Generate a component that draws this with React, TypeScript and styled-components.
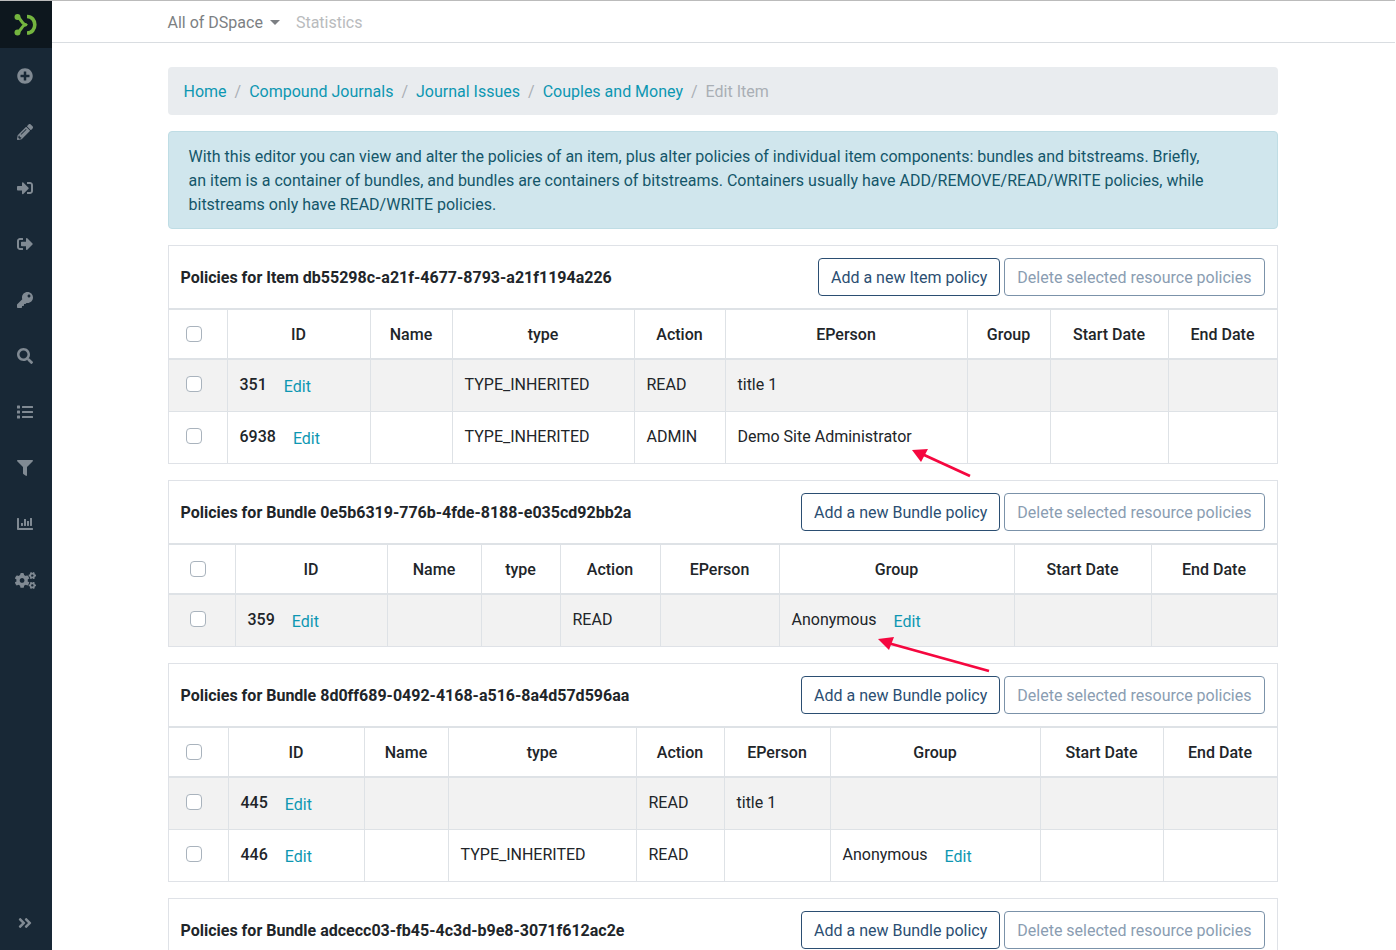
import React from 'react';
import styled, { createGlobalStyle } from 'styled-components';
import {
	FaPlusCircle,
	FaPencilAlt,
	FaSignInAlt,
	FaSignOutAlt,
	FaKey,
	FaSearch,
	FaList,
	FaFilter,
	FaChartBar,
	FaCogs,
	FaAngleDoubleRight,
} from 'react-icons/fa';

type Policy = {
	title: string;
	addLabel: string;
	widths: number[];
	rows: React.ReactNode[][];
};

const Edit = styled.a`
	color: #0d97b2;
	margin-left: 17px;
	position: relative;
	top: 2px;
`;

const heads = ['ID', 'Name', 'type', 'Action', 'EPerson', 'Group', 'Start Date', 'End Date'];

const policies: Policy[] = [
	{
		title: 'Policies for Item db55298c-a21f-4677-8793-a21f1194a226',
		addLabel: 'Add a new Item policy',
		widths: [58, 143, 82, 182, 91, 242, 83, 118, 109],
		rows: [
			[<><b>351</b><Edit>Edit</Edit></>, '', 'TYPE_INHERITED', 'READ', 'title 1', '', '', ''],
			[<><b>6938</b><Edit>Edit</Edit></>, '', 'TYPE_INHERITED', 'ADMIN', 'Demo Site Administrator', '', '', ''],
		],
	},
	{
		title: 'Policies for Bundle 0e5b6319-776b-4fde-8188-e035cd92bb2a',
		addLabel: 'Add a new Bundle policy',
		widths: [66, 152, 94, 79, 100, 119, 235, 137, 126],
		rows: [
			[<><b>359</b><Edit>Edit</Edit></>, '', '', 'READ', '', <>Anonymous<Edit>Edit</Edit></>, '', ''],
		],
	},
	{
		title: 'Policies for Bundle 8d0ff689-0492-4168-a516-8a4d57d596aa',
		addLabel: 'Add a new Bundle policy',
		widths: [59, 136, 84, 188, 88, 106, 210, 123, 114],
		rows: [
			[<><b>445</b><Edit>Edit</Edit></>, '', '', 'READ', 'title 1', '', '', ''],
			[<><b>446</b><Edit>Edit</Edit></>, '', 'TYPE_INHERITED', 'READ', '', <>Anonymous<Edit>Edit</Edit></>, '', ''],
		],
	},
	{
		title: 'Policies for Bundle adcecc03-fb45-4c3d-b9e8-3071f612ac2e',
		addLabel: 'Add a new Bundle policy',
		widths: [],
		rows: [],
	},
];

const menuIcons = [FaPlusCircle, FaPencilAlt, FaSignInAlt, FaSignOutAlt, FaKey, FaSearch, FaList, FaFilter, FaChartBar];

const App = (): JSX.Element => {
	return (
		<Page>
			<GlobalStyle />
			<Sidebar>
				<LogoBox>
					<svg width="24" height="24" viewBox="0 0 24 24" fill="none">
						<path d="M14 3.5 C19 3.5 21.8 7.5 21.8 11.8 C21.8 16 19 20 14 20" stroke="#74b53f" strokeWidth="3.6" />
						<path d="M4.5 4 C8 5.5 8 9.5 12 11.8 C8 14 8 18 4.5 19.5" stroke="#74b53f" strokeWidth="3" />
						<circle cx="4.5" cy="4" r="3" fill="#74b53f" />
						<circle cx="4.5" cy="19.5" r="3" fill="#74b53f" />
						<circle cx="12.5" cy="11.8" r="1.8" fill="#74b53f" />
					</svg>
				</LogoBox>
				<Menu>
					{menuIcons.map((Icon, i) => (
						<MenuItem key={i}>
							<Icon />
						</MenuItem>
					))}
					<MenuItem>
						<FaCogs size={21} />
					</MenuItem>
				</Menu>
				<Collapse>
					<FaAngleDoubleRight />
				</Collapse>
			</Sidebar>
			<Main>
				<TopNav>
					<NavInner>
						<NavDrop>All of DSpace</NavDrop>
						<NavLink>Statistics</NavLink>
					</NavInner>
				</TopNav>
				<Container>
					<Crumbs>
						<a>Home</a>
						<Sep>/</Sep>
						<a>Compound Journals</a>
						<Sep>/</Sep>
						<a>Journal Issues</a>
						<Sep>/</Sep>
						<a>Couples and Money</a>
						<Sep>/</Sep>
						<Current>Edit Item</Current>
					</Crumbs>
					<Alert>
						With this editor you can view and alter the policies of an item, plus alter policies of individual item components: bundles and bitstreams. Briefly,
						<br />
						an item is a container of bundles, and bundles are containers of bitstreams. Containers usually have ADD/REMOVE/READ/WRITE policies, while
						<br />
						bitstreams only have READ/WRITE policies.
					</Alert>
					{policies.map((p) => (
						<Card key={p.title}>
							<CardHead>
								<CardTitle>{p.title}</CardTitle>
								<Buttons>
									<AddBtn>{p.addLabel}</AddBtn>
									<DeleteBtn>Delete selected resource policies</DeleteBtn>
								</Buttons>
							</CardHead>
							{p.rows.length > 0 && (
								<Table>
									<colgroup>
										{p.widths.map((w, i) => (
											<Col key={i} $w={w} />
										))}
									</colgroup>
									<thead>
										<tr>
											<Th>
												<Check />
											</Th>
											{heads.map((h) => (
												<Th key={h}>{h}</Th>
											))}
										</tr>
									</thead>
									<tbody>
										{p.rows.map((r, i) => (
											<Tr key={i} $odd={i % 2 === 0}>
												<CheckCell>
													<Check />
												</CheckCell>
												{r.map((c, j) => (
													<Td key={j}>{c}</Td>
												))}
											</Tr>
										))}
									</tbody>
								</Table>
							)}
						</Card>
					))}
				</Container>
				<Arrows width="1396" height="950" viewBox="0 0 1396 950">
					<line x1="970" y1="476" x2="922" y2="454" stroke="#f5073f" strokeWidth="2.8" />
					<polygon points="912,450 928,449 921,462" fill="#f5073f" />
					<line x1="989" y1="671" x2="888" y2="643" stroke="#f5073f" strokeWidth="2.8" />
					<polygon points="878,639 894,637 889,650" fill="#f5073f" />
				</Arrows>
			</Main>
		</Page>
	);
};

const GlobalStyle = createGlobalStyle`
	html, body {
		margin: 0;
		height: 950px;
		overflow: hidden;
		background: #fff;
	}
	body {
		font-family: Roboto, "Liberation Sans", sans-serif;
		font-size: 16px;
		line-height: 24px;
		color: #212529;
	}
	* {
		box-sizing: border-box;
	}
`;
const Page = styled.div`
	display: flex;
	height: 950px;
	overflow: hidden;
`;
const Sidebar = styled.div`
	width: 52px;
	flex: none;
	display: flex;
	flex-direction: column;
	background-color: #182836;
	color: #808a93;
`;
const LogoBox = styled.div`
	height: 48px;
	display: flex;
	align-items: center;
	justify-content: center;
	padding-right: 2px;
	background-color: #0d171e;
	border-top: 1px solid #bbb;
`;
const Menu = styled.div`
	display: flex;
	flex-direction: column;
	flex: 1;
`;
const MenuItem = styled.div`
	height: 56px;
	display: flex;
	align-items: center;
	justify-content: center;
	padding-right: 2px;
	font-size: 16px;
`;
const Collapse = styled.div`
	height: 54px;
	display: flex;
	align-items: center;
	justify-content: center;
	padding-right: 2px;
	font-size: 16px;
`;
const Main = styled.div`
	flex: 1;
	position: relative;
`;
const TopNav = styled.div`
	height: 43px;
	padding-top: 2px;
	border-top: 1px solid #bbb;
	border-bottom: 1px solid #d9dde1;
	margin-right: 1px;
`;
const NavInner = styled.div`
	width: 1110px;
	margin-left: 115.5px;
	height: 100%;
	display: flex;
	align-items: center;
	gap: 15.5px;
`;
const NavDrop = styled.span`
	color: #7c7f83;
	display: flex;
	align-items: center;
	&::after {
		content: '';
		margin-left: 7.5px;
		border-top: 5px solid #7c7f83;
		border-left: 5px solid transparent;
		border-right: 5px solid transparent;
	}
`;
const NavLink = styled.span`
	color: #b9bbbd;
`;
const Container = styled.div`
	width: 1110px;
	margin: 24px 0 0 115.5px;
`;
const Crumbs = styled.div`
	height: 48px;
	display: flex;
	align-items: center;
	padding: 1px 16px 0;
	background-color: #e9ecef;
	border-radius: 4px;
	margin-bottom: 16px;
	& a {
		color: #0d97b2;
	}
`;
const Sep = styled.span`
	color: #a9afb5;
	padding: 0 8px;
`;
const Current = styled.span`
	color: #a9afb5;
`;
const Alert = styled.div`
	padding: 13px 20px 11px;
	background-color: #d0e6ed;
	border: 1px solid #bfdde5;
	border-radius: 4px;
	color: #14566a;
	margin-bottom: 16px;
`;
const Card = styled.div`
	border: 1px solid #dfe2e7;
	margin-bottom: 16px;
`;
const CardHead = styled.div`
	height: 62px;
	display: flex;
	align-items: center;
	justify-content: space-between;
	padding: 0 12px;
`;
const CardTitle = styled.span`
	font-weight: 700;
	padding-top: 1px;
`;
const Buttons = styled.div`
	display: flex;
	gap: 4px;
`;
const Btn = styled.button`
	height: 38px;
	padding: 0 12px;
	background: #fff;
	border-radius: 4px;
	font-family: inherit;
	font-size: 16px;
	border: 1px solid;
`;
const AddBtn = styled(Btn)`
	color: #2b4e72;
	border-color: #2b4e72;
`;
const DeleteBtn = styled(Btn)`
	color: #8a9db2;
	border-color: #7b92a9;
`;
const Table = styled.table`
	width: 100%;
	table-layout: fixed;
	border-collapse: separate;
	border-spacing: 0;
`;
const Col = styled.col<{ $w: number }>`
	width: ${(p) => p.$w}px;
`;
const Th = styled.th`
	height: 52px;
	padding: 2px 12px 0;
	font-weight: 500;
	text-align: center;
	border-top: 2px solid #dee2e6;
	border-bottom: 2px solid #dee2e6;
	border-left: 1px solid #dee2e6;
	&:first-child {
		border-left: 0;
		padding: 0 8px 0 0;
	}
`;
const Tr = styled.tr<{ $odd: boolean }>`
	background-color: ${(p) => (p.$odd ? '#f2f2f2' : '#fff')};
	&:last-child td {
		border-bottom: 0;
		height: 51px;
	}
`;
const Td = styled.td`
	height: 52px;
	padding: 0 12px 2px;
	border-bottom: 1px solid #dee2e6;
	border-left: 1px solid #dee2e6;
	vertical-align: middle;
	& b {
		font-weight: 500;
	}
`;
const CheckCell = styled(Td)`
	border-left: 0;
	padding: 0 8px 4px 0;
`;
const Check = styled.span`
	display: block;
	margin: 0 auto;
	width: 16px;
	height: 16px;
	background: #fff;
	border: 1px solid #a9b3bd;
	border-radius: 4px;
`;
const Arrows = styled.svg`
	position: absolute;
	left: -52px;
	top: 0;
	pointer-events: none;
`;

export default App;
